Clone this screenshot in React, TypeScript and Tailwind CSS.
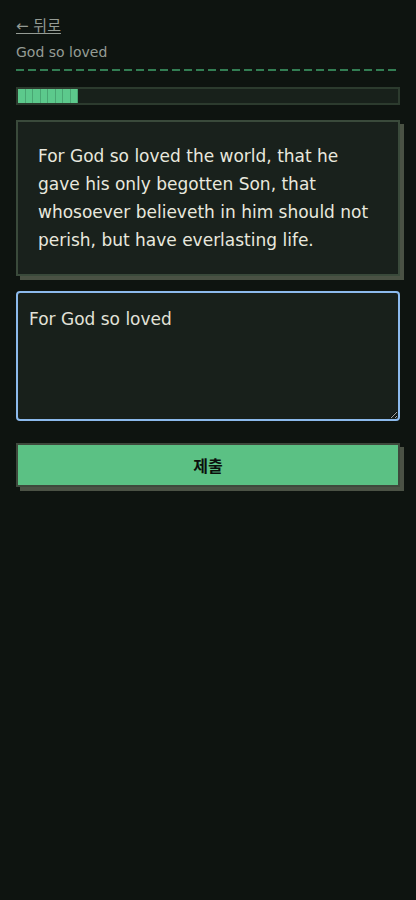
import { useState } from 'react';

const VERSE =
  'For God so loved the world, that he gave his only begotten Son, that whosoever believeth in him should not perish, but have everlasting life.';

function Progress({ filled }: { filled: number }) {
  return (
    <div className="mt-4 h-[18px] border-2 border-[#2c3b2e] bg-[#18211b] flex">
      <div className="flex h-full">
        {Array.from({ length: filled }).map((_, i) => (
          <div key={i} className="w-[7.5px] h-full bg-[#5cc98c] border-r border-[#49a673]" />
        ))}
      </div>
    </div>
  );
}

export default function App() {
  const [answer, setAnswer] = useState('For God so loved');

  return (
    <div className="min-h-[900px] bg-[#0e1410] px-4 pt-4 font-['DejaVu_Sans','Noto_Sans_CJK_KR',sans-serif]">
      {/* header */}
      <a href="#" className="block w-fit text-[15px] leading-5 text-[#959c95] underline underline-offset-2">
        ← 뒤로
      </a>
      <p className="mt-[6px] text-sm leading-5 text-[#959c95]">God so loved</p>
      <div className="mt-[7px] h-[2px] bg-[repeating-linear-gradient(90deg,#327d53_0_8px,transparent_8px_12px)]" />

      <Progress filled={8} />

      {/* verse card */}
      <div className="mt-[15px] border-2 border-[#3a4a3b] bg-[#19211c] px-5 py-5 shadow-[4px_4px_0_#4a5244]">
        <p className="text-[17px] leading-7 text-[#e8e8de]">{VERSE}</p>
      </div>

      {/* answer */}
      <textarea
        value={answer}
        onChange={(e) => setAnswer(e.target.value)}
        className="mt-[15px] block w-full h-[130px] rounded-[4px] border-2 border-[#8cbaec] bg-[#18201b] px-[11px] py-3 text-[17px] leading-7 text-[#e2e2d8] outline-none font-['DejaVu_Sans',sans-serif]"
      />

      <button className="mt-[22px] w-full h-[44px] border-2 border-[#3e493c] bg-[#5bc184] shadow-[4px_4px_0_#4b5245] text-base font-bold text-[#0b0f0c] font-['Noto_Sans_CJK_KR',sans-serif]">
        제출
      </button>
    </div>
  );
}
